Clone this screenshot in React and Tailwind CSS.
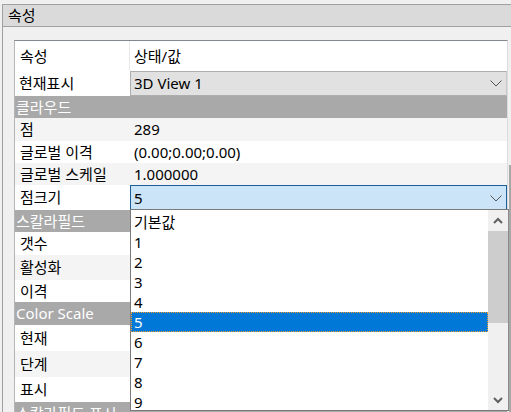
import React from "react";

const FONT = { fontFamily: '"Noto Sans", "Noto Sans CJK KR", sans-serif' };

function Chevron() {
  return (
    <svg width="12" height="7" viewBox="0 0 12 7" className="shrink-0">
      <polyline points="0.5,0.5 6,6 11.5,0.5" fill="none" stroke="#555" strokeWidth="1" />
    </svg>
  );
}

function ScrollArrow({ up }) {
  return (
    <svg width="10" height="7" viewBox="0 0 10 7">
      <polyline
        points={up ? "1,6 5,2 9,6" : "1,1 5,5 9,1"}
        fill="none"
        stroke="#606060"
        strokeWidth="2"
      />
    </svg>
  );
}

function Row({ label, value, h, bg = "bg-white" }) {
  return (
    <div className={`flex ${h} ${bg}`}>
      <div className="w-[115px] pl-[5px] flex items-center">{label}</div>
      <div className="flex-1 pl-[4px] flex items-center">{value}</div>
    </div>
  );
}

function Category({ label, h }) {
  return (
    <div className={`${h} bg-[#a9a9a9] text-white pl-[1px] flex items-center`}>{label}</div>
  );
}

const items = ["기본값", "1", "2", "3", "4", "5", "6", "7", "8", "9"];

export default function App() {
  return (
    <div
      className="relative w-[511px] h-[412px] overflow-hidden bg-[#f0f0f0] text-[15px] leading-none text-black"
      style={FONT}
    >
      <div className="mt-[4px] ml-[2px] border-l border-t border-[#a0a0a0] h-[420px]">
        <div className="h-[22px] bg-[#dadada] border-b border-[#a0a0a0] pl-[5px] flex items-center">속성</div>
        <div className="pt-[13px] flex">
          <div className="ml-[11px] w-[495px] bg-white border-t border-[#828790] border-l border-l-[#b5b5b5] border-r border-r-[#dcdcdc]">
            {/* header row */}
            <div className="flex h-[30px]">
              <div className="w-[115px] pl-[5px] flex items-center border-r border-[#e8e8e8]">속성</div>
              <div className="flex-1 pl-[4px] flex items-center">상태/값</div>
            </div>
            {/* 현재표시 */}
            <div className="flex h-[25px]">
              <div className="w-[115px] pl-[4px] flex items-center">현재표시</div>
              <div className="flex-1 bg-[#e1e1e1] border border-[#adadad] border-r-[#c8c8c8] pl-[3px] pr-[4px] flex items-center justify-between">
                <span>3D View 1</span>
                <Chevron />
              </div>
            </div>
            <Category label="클라우드" h="h-[22px]" />
            <Row label="점" value="289" h="h-[23px]" bg="bg-[#f4f4f4]" />
            <Row label="글로벌 이격" value="(0.00;0.00;0.00)" h="h-[22px]" />
            <Row label="글로벌 스케일" value="1.000000" h="h-[22px]" bg="bg-[#f4f4f4]" />
            <div className="flex h-[25px]">
              <div className="w-[115px] pl-[5px] flex items-center">점크기</div>
              <div className="flex-1 bg-[#cce4f7] border border-[#1a5e9a] border-b-0 pl-[3px] pr-[4px] flex items-center justify-between">
                <span>5</span>
                <Chevron />
              </div>
            </div>
            <Category label="스칼라필드" h="h-[22px]" />
            <Row label="갯수" value="" h="h-[23px]" />
            <Row label="활성화" value="" h="h-[25px]" bg="bg-[#f4f4f4]" />
            <Row label="이격" value="" h="h-[22px]" />
            <Category label="Color Scale" h="h-[23px]" />
            <Row label="현재" value="" h="h-[26px]" />
            <Row label="단계" value="" h="h-[26px]" bg="bg-[#f4f4f4]" />
            <Row label="표시" value="" h="h-[25px]" />
            <Category label="스칼라필드 표시" h="h-[22px]" />
          </div>
          <div className="w-[3px] flex flex-col">
            <div className="h-[125px]" />
            <div className="flex-1 ml-[1px] bg-[#a8a8a8]" />
          </div>
        </div>
      </div>

      {/* open dropdown list */}
      <div className="absolute left-[130px] top-[209px] w-[379px] h-[202px] bg-white border border-[#7a7a7a] border-r-[#8a8a8a] flex">
        <div className="flex-1 pt-[2px]">
          {items.map((it) =>
            it === "5" ? (
              <div
                key={it}
                className="h-[20px] bg-[#0078d7] text-white pl-[3px] flex items-center outline-1 outline-dotted outline-[#f0a030] -outline-offset-1"
              >
                {it}
              </div>
            ) : (
              <div key={it} className="h-[20px] pl-[3px] flex items-center">
                {it}
              </div>
            )
          )}
        </div>
        <div className="w-[20px] bg-[#f0f0f0] flex flex-col">
          <div className="h-[21px] flex items-center justify-center">
            <ScrollArrow up />
          </div>
          <div className="h-[92px] bg-[#cdcdcd]" />
          <div className="flex-1" />
          <div className="h-[20px] flex items-center justify-center">
            <ScrollArrow />
          </div>
        </div>
      </div>
    </div>
  );
}
